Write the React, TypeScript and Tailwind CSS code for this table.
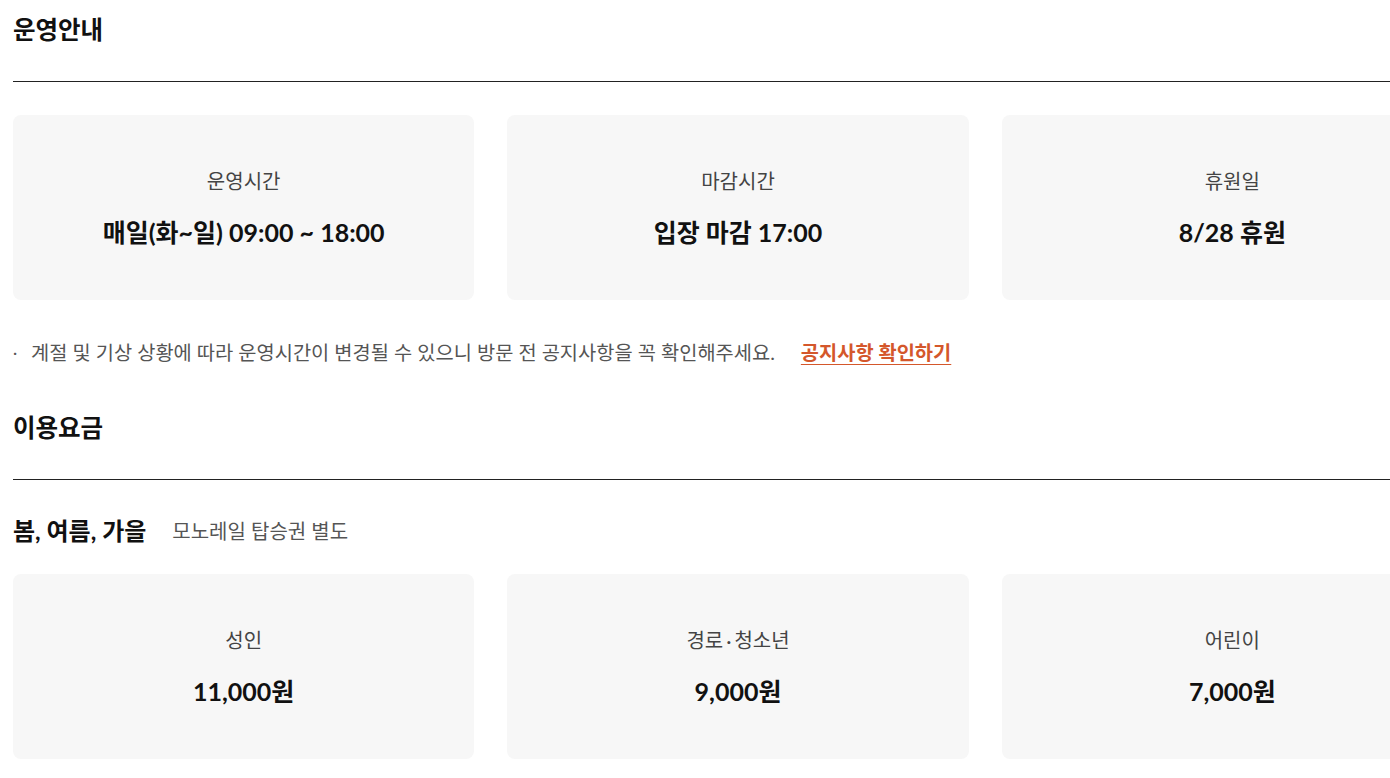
import React from 'react'

const font = { fontFamily: 'Lato, "Noto Sans CJK KR", sans-serif' }

const hours = [
  { label: '운영시간', value: '매일(화~일) 09:00 ~ 18:00' },
  { label: '마감시간', value: '입장 마감 17:00' },
  { label: '휴원일', value: '8/28 휴원' },
]

const fees: { label: React.ReactNode; key: string; value: string }[] = [
  { key: 'adult', label: '성인', value: '11,000원' },
  {
    key: 'senior',
    label: (
      <>
        경로<span className="mx-[3px]">·</span>청소년
      </>
    ),
    value: '9,000원',
  },
  { key: 'child', label: '어린이', value: '7,000원' },
]

function InfoCard({ label, value }: { label: React.ReactNode; value: string }) {
  return (
    <div className="h-[185px] rounded-lg bg-[#f7f7f7] flex flex-col items-center justify-center gap-[21px]">
      <p className="text-[20px] leading-[28px] text-[#444]">{label}</p>
      <p className="text-[25px] leading-[32px] font-bold text-[#111]">{value}</p>
    </div>
  )
}

function SectionTitle({ children }: { children: React.ReactNode }) {
  return (
    <div className="border-b border-[#222] pb-[33px]">
      <h2 className="text-[24.5px] leading-[36px] font-bold text-[#111]">{children}</h2>
    </div>
  )
}

export default function App() {
  return (
    <div className="w-full overflow-hidden bg-white min-h-screen" style={font}>
      <div className="w-[1450px] ml-[13px] pt-[12px]">
        {/* 운영안내 */}
        <SectionTitle>운영안내</SectionTitle>
        <div className="grid grid-cols-3 gap-[33px] mt-[33px]">
          {hours.map((h) => (
            <InfoCard key={h.label} {...h} />
          ))}
        </div>
        <div className="mt-[38px] flex items-center text-[19.8px] leading-[28px] text-[#555]">
          <span className="w-[18px] text-[16px]">·</span>
          <span>계절 및 기상 상황에 따라 운영시간이 변경될 수 있으니 방문 전 공지사항을 꼭 확인해주세요.</span>
          <a className="ml-[26px] font-bold text-[#d4572b] underline underline-offset-4">공지사항 확인하기</a>
        </div>

        {/* 이용요금 */}
        <div className="mt-[44px]">
          <SectionTitle>이용요금</SectionTitle>
        </div>
        <div className="mt-[33px] flex items-center gap-[26px]">
          <h3 className="text-[24px] leading-[36px] font-bold text-[#111]">봄, 여름, 가을</h3>
          <span className="text-[20px] leading-[28px] text-[#555]">모노레일 탑승권 별도</span>
        </div>
        <div className="grid grid-cols-3 gap-[33px] mt-[25px]">
          {fees.map((f) => (
            <InfoCard key={f.key} label={f.label} value={f.value} />
          ))}
        </div>
      </div>
    </div>
  )
}
